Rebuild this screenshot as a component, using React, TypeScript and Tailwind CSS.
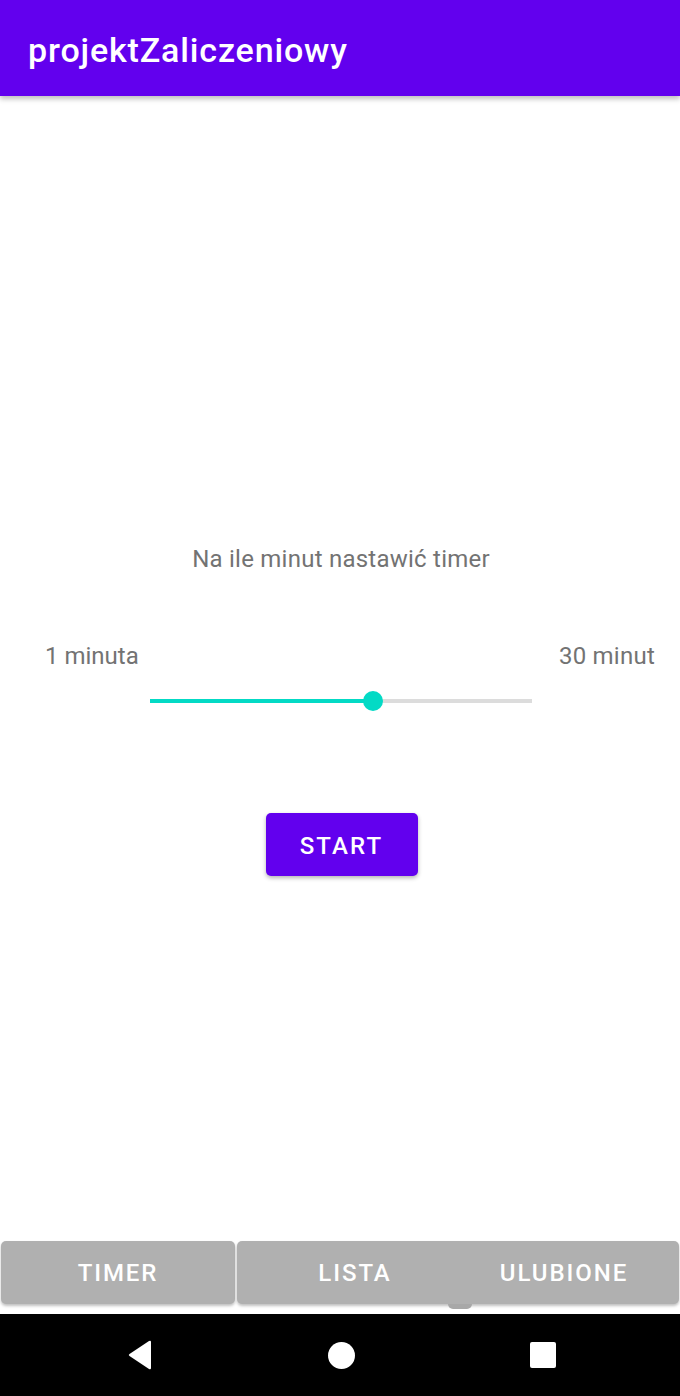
import React from "react";

export default function App() {
  return (
    <div className="w-[680px] h-[1396px] flex flex-col bg-white font-['Roboto',sans-serif] overflow-hidden">
      <header className="h-[96px] bg-[#6200ee] flex items-center pl-[28px] shadow-[0_3px_5px_rgba(0,0,0,0.25)] z-10">
        <h1 className="text-white text-[34px] tracking-[0.025em] font-medium leading-none pt-[4px]">projektZaliczeniowy</h1>
      </header>

      <main className="flex-1 flex flex-col items-center pt-[449px]">
        <p className="text-[24px] tracking-[0.01em] leading-[28px] text-[#737373] pl-[2px]">Na ile minut nastawić timer</p>

        <div className="w-full flex justify-between px-[25px] mt-[69px] text-[24px] leading-[28px] text-[#737373]">
          <span className="pl-[20px]">1 minuta</span>
          <span className="tracking-[0.01em]">30 minut</span>
        </div>

        <div className="w-[382px] h-[20px] mt-[21px] flex items-center ml-[1px]">
          <div className="w-[223px] h-[4px] bg-[#03dac5]" />
          <div className="w-[20px] h-[20px] rounded-full bg-[#03dac5] -mx-[10px] relative" />
          <div className="flex-1 h-[4px] bg-[#dcdcdc]" />
        </div>

        <button className="mt-[102px] ml-[3px] w-[152px] h-[63px] pt-[3px] rounded-[5px] bg-[#6200ee] text-white text-[24px] font-medium tracking-[0.09em] shadow-[0_2px_4px_rgba(0,0,0,0.3)]">
          START
        </button>

        <div className="flex-1" />

        <div className="w-full h-[63px] flex gap-[2px] px-[1px] text-white text-[24px] font-medium tracking-[0.08em]">
          <div className="w-[234px] rounded-[5px] bg-[#b0b0b0] flex items-center justify-center shadow-[0_2px_3px_rgba(0,0,0,0.25)]">
            TIMER
          </div>
          <div className="flex-1 rounded-[5px] bg-[#b0b0b0] flex items-center shadow-[0_2px_3px_rgba(0,0,0,0.25)]">
            <span className="w-[236px] text-center">LISTA</span>
            <span className="flex-1 text-center pr-[24px]">ULUBIONE</span>
          </div>
        </div>
        <div className="w-full h-[10px] flex">
          <div className="ml-[448px] w-[24px] h-[5px] rounded-b-full bg-[#a8a8a8]" />
        </div>
      </main>

      <nav className="h-[82px] bg-black flex items-center">
        <div className="w-[127px]" />
        <svg width="26" height="30" viewBox="0 0 26 30">
          <path d="M24 2 L24 28 Q24 30 22 29 L2.5 16 Q1 15 2.5 14 L22 1 Q24 0 24 2 Z" fill="white" />
        </svg>
        <div className="w-[175px]" />
        <div className="w-[27px] h-[27px] rounded-full bg-white" />
        <div className="w-[175px]" />
        <div className="w-[26px] h-[26px] rounded-[2px] bg-white" />
      </nav>
    </div>
  );
}
